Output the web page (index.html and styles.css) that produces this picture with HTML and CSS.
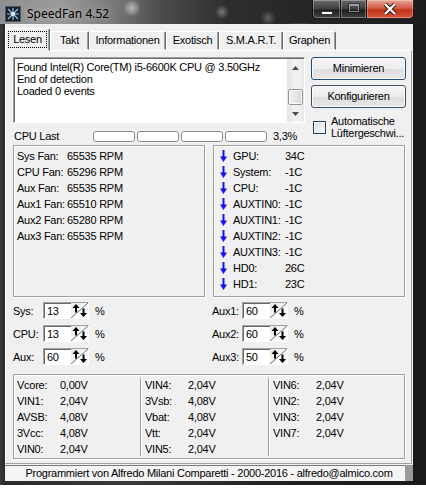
FILE: index.html
```html
<!DOCTYPE html>
<html lang="de">
<head>
  <meta charset="UTF-8">
  <title>SpeedFan 4.52</title>
  <link rel="stylesheet" href="styles.css">
</head>
<body>
<div class="window">
  <div class="titlebar">
    <svg class="app-icon" width="16" height="16" viewBox="0 0 16 16">
      <rect width="16" height="16" fill="#14202c"/>
      <rect x="0.5" y="0.5" width="15" height="15" fill="none" stroke="#4a5a6a"/>
      <g stroke="#9ec4e8" stroke-width="1.2">
        <path d="M8 8 L3 3 M8 8 L13 3 M8 8 L3 13 M8 8 L13 13 M8 8 V2 M8 8 H14 M8 8 V14 M8 8 H2"/>
      </g>
      <circle cx="8" cy="8" r="2" fill="#d8ecff"/>
    </svg>
    <span class="title">SpeedFan 4.52</span>
    <div class="caption">
      <div class="cap-btn cap-min"><span class="min-glyph"></span></div>
      <div class="cap-btn cap-max"><span class="max-glyph"></span></div>
      <div class="cap-btn cap-close">
        <svg width="14" height="12" viewBox="0 0 14 12">
          <path d="M2 1 L12 11 M12 1 L2 11" stroke="#3a1008" stroke-width="4.2"/>
          <path d="M2 1 L12 11 M12 1 L2 11" stroke="#fff" stroke-width="2.4"/>
        </svg>
      </div>
    </div>
  </div>

  <div class="client">
    <div class="tabs">
      <div class="tab tab-lesen active"><span class="focus">Lesen</span></div>
      <div class="tab tab-takt">Takt</div>
      <div class="tab tab-info">Informationen</div>
      <div class="tab tab-exo">Exotisch</div>
      <div class="tab tab-smart">S.M.A.R.T.</div>
      <div class="tab tab-graph">Graphen</div>
    </div>

    <div class="panel">
      <div class="top">
        <div class="top-left">
          <div class="log">
            <div class="log-text">
              <div>Found Intel(R) Core(TM) i5-6600K CPU @ 3.50GHz</div>
              <div>End of detection</div>
              <div>Loaded 0 events</div>
            </div>
            <div class="vscroll">
              <div class="sb-arrow">
                <svg width="7" height="4" viewBox="0 0 7 4"><path d="M3.5 0 L7 4 H0 Z" fill="#4d4d4d"/></svg>
              </div>
              <div class="sb-track"></div>
              <div class="sb-thumb"></div>
              <div class="sb-arrow">
                <svg width="7" height="4" viewBox="0 0 7 4"><path d="M0 0 H7 L3.5 4 Z" fill="#4d4d4d"/></svg>
              </div>
            </div>
          </div>
          <div class="cpu-row">
            <span class="cpu-label">CPU Last</span>
            <div class="cpu-bars"><i></i><i></i><i></i><i></i></div>
            <span class="cpu-val">3,3%</span>
          </div>
        </div>
        <div class="top-right">
          <div class="btn btn-default">Minimieren</div>
          <div class="btn">Konfigurieren</div>
          <div class="check">
            <span class="check-box"></span>
            <span class="check-label">Automatische<br>Lüftergeschwi...</span>
          </div>
        </div>
      </div>

      <div class="sensors">
        <div class="group fans">
          <div class="row"><span class="k">Sys Fan:</span><span>65535 RPM</span></div>
          <div class="row"><span class="k">CPU Fan:</span><span>65296 RPM</span></div>
          <div class="row"><span class="k">Aux Fan:</span><span>65535 RPM</span></div>
          <div class="row"><span class="k">Aux1 Fan:</span><span>65510 RPM</span></div>
          <div class="row"><span class="k">Aux2 Fan:</span><span>65280 RPM</span></div>
          <div class="row"><span class="k">Aux3 Fan:</span><span>65535 RPM</span></div>
        </div>
        <div class="group temps">
          <div class="row"><svg class="arrow" viewBox="0 0 7 12"><path d="M2.5 0h2v6.5h2.5l-3.5 5.5l-3.5-5.5h2.5z"/></svg><span class="k">GPU:</span><span>34C</span></div>
          <div class="row"><svg class="arrow" viewBox="0 0 7 12"><path d="M2.5 0h2v6.5h2.5l-3.5 5.5l-3.5-5.5h2.5z"/></svg><span class="k">System:</span><span>-1C</span></div>
          <div class="row"><svg class="arrow" viewBox="0 0 7 12"><path d="M2.5 0h2v6.5h2.5l-3.5 5.5l-3.5-5.5h2.5z"/></svg><span class="k">CPU:</span><span>-1C</span></div>
          <div class="row"><svg class="arrow" viewBox="0 0 7 12"><path d="M2.5 0h2v6.5h2.5l-3.5 5.5l-3.5-5.5h2.5z"/></svg><span class="k">AUXTIN0:</span><span>-1C</span></div>
          <div class="row"><svg class="arrow" viewBox="0 0 7 12"><path d="M2.5 0h2v6.5h2.5l-3.5 5.5l-3.5-5.5h2.5z"/></svg><span class="k">AUXTIN1:</span><span>-1C</span></div>
          <div class="row"><svg class="arrow" viewBox="0 0 7 12"><path d="M2.5 0h2v6.5h2.5l-3.5 5.5l-3.5-5.5h2.5z"/></svg><span class="k">AUXTIN2:</span><span>-1C</span></div>
          <div class="row"><svg class="arrow" viewBox="0 0 7 12"><path d="M2.5 0h2v6.5h2.5l-3.5 5.5l-3.5-5.5h2.5z"/></svg><span class="k">AUXTIN3:</span><span>-1C</span></div>
          <div class="row"><svg class="arrow" viewBox="0 0 7 12"><path d="M2.5 0h2v6.5h2.5l-3.5 5.5l-3.5-5.5h2.5z"/></svg><span class="k">HD0:</span><span>26C</span></div>
          <div class="row"><svg class="arrow" viewBox="0 0 7 12"><path d="M2.5 0h2v6.5h2.5l-3.5 5.5l-3.5-5.5h2.5z"/></svg><span class="k">HD1:</span><span>23C</span></div>
        </div>
      </div>

      <div class="speeds">
        <div class="speed-col">
          <div class="speed"><span class="k">Sys:</span><div class="spin"><span class="field">13</span><svg class="spin-btn" viewBox="0 0 17 15"><path d="M0 15 L17 0" stroke="#6a6a6a"/><path d="M5 1 L8.5 5 H6 V9.5 H4 V5 H1.5 Z M12.5 14 L9 10 H11.5 V5.5 H13.5 V10 H16 Z"/></svg></div><span class="pct">%</span></div>
          <div class="speed"><span class="k">CPU:</span><div class="spin"><span class="field">13</span><svg class="spin-btn" viewBox="0 0 17 15"><path d="M0 15 L17 0" stroke="#6a6a6a"/><path d="M5 1 L8.5 5 H6 V9.5 H4 V5 H1.5 Z M12.5 14 L9 10 H11.5 V5.5 H13.5 V10 H16 Z"/></svg></div><span class="pct">%</span></div>
          <div class="speed"><span class="k">Aux:</span><div class="spin"><span class="field">60</span><svg class="spin-btn" viewBox="0 0 17 15"><path d="M0 15 L17 0" stroke="#6a6a6a"/><path d="M5 1 L8.5 5 H6 V9.5 H4 V5 H1.5 Z M12.5 14 L9 10 H11.5 V5.5 H13.5 V10 H16 Z"/></svg></div><span class="pct">%</span></div>
        </div>
        <div class="speed-col">
          <div class="speed"><span class="k">Aux1:</span><div class="spin"><span class="field">60</span><svg class="spin-btn" viewBox="0 0 17 15"><path d="M0 15 L17 0" stroke="#6a6a6a"/><path d="M5 1 L8.5 5 H6 V9.5 H4 V5 H1.5 Z M12.5 14 L9 10 H11.5 V5.5 H13.5 V10 H16 Z"/></svg></div><span class="pct">%</span></div>
          <div class="speed"><span class="k">Aux2:</span><div class="spin"><span class="field">60</span><svg class="spin-btn" viewBox="0 0 17 15"><path d="M0 15 L17 0" stroke="#6a6a6a"/><path d="M5 1 L8.5 5 H6 V9.5 H4 V5 H1.5 Z M12.5 14 L9 10 H11.5 V5.5 H13.5 V10 H16 Z"/></svg></div><span class="pct">%</span></div>
          <div class="speed"><span class="k">Aux3:</span><div class="spin"><span class="field">50</span><svg class="spin-btn" viewBox="0 0 17 15"><path d="M0 15 L17 0" stroke="#6a6a6a"/><path d="M5 1 L8.5 5 H6 V9.5 H4 V5 H1.5 Z M12.5 14 L9 10 H11.5 V5.5 H13.5 V10 H16 Z"/></svg></div><span class="pct">%</span></div>
        </div>
      </div>

      <div class="group volts">
        <div class="vcol">
          <div class="vrow"><span class="k">Vcore:</span><span>0,00V</span></div>
          <div class="vrow"><span class="k">VIN1:</span><span>2,04V</span></div>
          <div class="vrow"><span class="k">AVSB:</span><span>4,08V</span></div>
          <div class="vrow"><span class="k">3Vcc:</span><span>4,08V</span></div>
          <div class="vrow"><span class="k">VIN0:</span><span>2,04V</span></div>
        </div>
        <div class="vcol sep">
          <div class="vrow"><span class="k">VIN4:</span><span>2,04V</span></div>
          <div class="vrow"><span class="k">3Vsb:</span><span>4,08V</span></div>
          <div class="vrow"><span class="k">Vbat:</span><span>4,08V</span></div>
          <div class="vrow"><span class="k">Vtt:</span><span>2,04V</span></div>
          <div class="vrow"><span class="k">VIN5:</span><span>2,04V</span></div>
        </div>
        <div class="vcol sep">
          <div class="vrow"><span class="k">VIN6:</span><span>2,04V</span></div>
          <div class="vrow"><span class="k">VIN2:</span><span>2,04V</span></div>
          <div class="vrow"><span class="k">VIN3:</span><span>2,04V</span></div>
          <div class="vrow"><span class="k">VIN7:</span><span>2,04V</span></div>
        </div>
      </div>
    </div>

    <div class="status">
      <div class="status-text">Programmiert von Alfredo Milani Comparetti - 2000-2016 - alfredo@almico.com</div>
      <div class="status-grip"></div>
    </div>
  </div>
</div>
</body>
</html>
```

FILE: styles.css
```css
* {
  box-sizing: border-box;
}

body {
  margin: 0;
  background: #fff;
  font-family: "Liberation Sans", Arial, sans-serif;
  font-size: 11px;
  letter-spacing: -0.25px;
  color: #000;
}

/* window frame (aero glass) */
.window {
  width: 426px;
  height: 485px;
  display: flex;
  flex-direction: column;
  background:
    linear-gradient(90deg, #3a3a3a 0, #2a2a2a 5px, #3a3a3a 30%, #1e1e1e 70%, #1a1a1a 100%);
}

.titlebar {
  height: 24px;
  display: flex;
  align-items: flex-start;
  background:
    radial-gradient(circle at 132px 8px, rgba(255,255,255,.55) 0, rgba(255,255,255,0) 9px),
    radial-gradient(circle at 222px 12px, rgba(255,255,255,.35) 0, rgba(255,255,255,0) 7px),
    radial-gradient(circle at 268px 18px, rgba(255,255,255,.25) 0, rgba(255,255,255,0) 8px),
    radial-gradient(ellipse at 300px 24px, rgba(255,255,255,.2) 0, rgba(255,255,255,0) 14px),
    linear-gradient(90deg, #8f8f8f 0, #9a9a9a 60px, #7c7c7c 110px, #4c4c4c 160px, #2e2e2e 230px, #242424 320px, #1c1c1c 426px);
}

.app-icon {
  margin: 6px 0 0 5px;
  width: 16px;
  height: 16px;
  flex: none;
}

.title {
  margin: 5px 0 0 6px;
  font-family: "Noto Sans", "Open Sans", sans-serif;
  font-size: 12px;
  letter-spacing: 0;
  color: #000;
  text-shadow: 0 0 6px rgba(255,255,255,.6);
}

.caption {
  margin-left: auto;
  margin-right: 12px;
  display: flex;
  height: 19px;
}

.cap-btn {
  height: 19px;
  border: 1px solid rgba(0,0,0,.75);
  border-top: none;
  box-shadow: inset 0 0 0 1px rgba(255,255,255,.3);
  background: linear-gradient(rgba(255,255,255,.32), rgba(255,255,255,.12) 50%, rgba(0,0,0,.15) 55%, rgba(255,255,255,.15));
  display: flex;
  align-items: center;
  justify-content: center;
}

.cap-min {
  width: 29px;
  border-radius: 0 0 0 5px;
}

.cap-max {
  width: 26px;
  border-left: none;
}

.cap-close {
  width: 47px;
  border-left: none;
  border-radius: 0 0 5px 0;
  background: linear-gradient(#e8a596, #d25c44 45%, #c0331a 55%, #d6563c);
}

.min-glyph {
  width: 12px;
  height: 4px;
  margin-top: 7px;
  background: #fff;
  border: 1px solid #333;
}

.max-glyph {
  width: 10px;
  height: 8px;
  border: 1px solid rgba(255,255,255,.45);
  border-top-width: 2px;
  outline: 1px solid rgba(0,0,0,.35);
  margin-top: -2px;
}

/* client area */
.client {
  margin-left: 5px;
  width: 408px;
  height: 457px;
  background: #f0f0f0;
  display: flex;
  flex-direction: column;
}

.tabs {
  height: 26px;
  display: flex;
  align-items: flex-start;
  position: relative;
  z-index: 1;
}

.tab {
  margin-top: 7px;
  height: 19px;
  line-height: 17px;
  text-align: center;
  white-space: nowrap;
  border: 1px solid;
  border-color: #fff #696969 transparent #fff;
  border-radius: 2px 2px 0 0;
  box-shadow: inset -1px 0 #a0a0a0;
  background: #f0f0f0;
}

.tab.active {
  margin-top: 4px;
  height: 23px;
  padding-top: 2px;
}

.focus {
  display: inline-block;
  padding: 0 4px;
  line-height: 15px;
  border: 1px dotted #000;
}

.tab-lesen { width: 45px; }
.tab-takt { width: 39px; }
.tab-info { width: 77px; }
.tab-exo { width: 53px; }
.tab-smart { width: 64px; }
.tab-graph { width: 53px; }

.panel {
  height: 414px;
  width: 407px;
  border: 1px solid;
  border-color: #fff #a0a0a0 #a0a0a0 #fff;
  padding: 6px 0 0 7px;
}

.top {
  display: flex;
  gap: 6px;
}

.top-left {
  width: 292px;
}

.log {
  height: 66px;
  display: flex;
  border: 1px solid;
  border-color: #a0a0a0 #fff #fff #a0a0a0;
  box-shadow: inset 1px 1px #696969;
  background: #fff;
  padding: 1px 0 0 1px;
}

.log-text {
  flex: 1;
  padding: 2px 0 0 2px;
  line-height: 12px;
  white-space: nowrap;
  overflow: hidden;
}

.vscroll {
  width: 17px;
  display: flex;
  flex-direction: column;
  background: linear-gradient(90deg, #e3e3e3, #f1f1f1 40%, #f1f1f1 70%, #e8e8e8);
}

.sb-arrow {
  height: 17px;
  display: flex;
  align-items: center;
  justify-content: center;
}

.sb-track {
  flex: 1;
}

.sb-thumb {
  height: 16px;
  margin: 0 1px;
  border: 1px solid #979797;
  border-radius: 2px;
  background: linear-gradient(90deg, #f3f3f3, #e6e6e6 50%, #d6d6d6);
  box-shadow: inset 0 0 0 1px #fafafa;
}

.cpu-row {
  margin-top: 6px;
  height: 14px;
  display: flex;
  align-items: center;
}

.cpu-label {
  width: 80px;
  padding-left: 1px;
}

.cpu-bars {
  display: flex;
  gap: 2px;
}

.cpu-bars i {
  width: 42px;
  height: 11px;
  border: 1px solid #8c8c8c;
  border-radius: 3px;
  background: #fff;
}

.cpu-val {
  margin-left: 6px;
}

.top-right {
  width: 95px;
  display: flex;
  flex-direction: column;
}

.btn {
  height: 23px;
  line-height: 21px;
  text-align: center;
  border: 1px solid #3c4f68;
  border-radius: 3px;
  background: linear-gradient(#f6f6f6, #ececec 50%, #dfdfdf 52%, #e6e6e6);
  box-shadow: inset 0 0 0 1px #fcfcfc;
}

.btn + .btn {
  margin-top: 5px;
}

.btn-default {
  border-color: #1d4a78;
}

.check {
  margin-top: 7px;
  display: flex;
  align-items: center;
}

.check-box {
  width: 13px;
  height: 13px;
  margin: 0 5px 0 2px;
  border: 1px solid #1f4266;
  background: linear-gradient(135deg, #dcdcdc, #fbfbfb);
  box-shadow: inset 0 0 0 1px #f4f4f4;
  flex: none;
}

.check-label {
  line-height: 12px;
  white-space: nowrap;
}

/* sensor groups */
.group {
  border: 1px solid #a0a0a0;
  box-shadow: inset 1px 1px #fff, 1px 1px #fff;
}

.sensors {
  margin-top: 2px;
  display: flex;
  gap: 8px;
}

.fans,
.temps {
  width: 192px;
  height: 152px;
  padding-top: 2px;
}

.fans {
  padding-left: 3px;
}

.temps {
  padding-left: 6px;
}

.row {
  height: 16px;
  line-height: 16px;
  display: flex;
  align-items: center;
  white-space: nowrap;
}

.row .k {
  flex: none;
}

.fans .k {
  min-width: 50px;
}

.temps .k {
  min-width: 52px;
}

.arrow {
  width: 7px;
  height: 12px;
  margin-right: 6px;
  fill: #1212f5;
  flex: none;
}

/* fan speed inputs */
.speeds {
  margin-top: 5px;
  display: flex;
}

.speed-col {
  width: 200px;
  display: flex;
  flex-direction: column;
  gap: 6px;
}

.speed {
  height: 17px;
  display: flex;
  align-items: center;
}

.speed .k {
  width: 30px;
}

.spin {
  width: 46px;
  height: 17px;
  display: flex;
  border: 1px solid;
  border-color: #a0a0a0 #fff #fff #a0a0a0;
  box-shadow: inset 1px 1px #696969;
  background: #fff;
}

.field {
  flex: 1;
  padding: 1px 0 0 3px;
  line-height: 14px;
}

.spin-btn {
  width: 17px;
  height: 15px;
  background: linear-gradient(135deg, #e6e6e6, #f6f6f6 50%, #ffffff 51%, #f4f4f4);
  fill: #000;
}

.pct {
  margin-left: 6px;
}

/* voltages */
.volts {
  margin-top: 9px;
  width: 392px;
  height: 85px;
  display: flex;
  padding: 3px 0 2px 0;
}

.vcol {
  width: 126px;
  padding-left: 3px;
}

.vcol.sep {
  width: 128px;
  border-left: 1px solid #a0a0a0;
  box-shadow: inset 1px 0 #fff;
  padding-left: 4px;
}

.vcol.sep:last-child {
  flex: 1;
}

.vrow {
  height: 16px;
  line-height: 15px;
  display: flex;
}

.vrow .k {
  width: 43px;
}

/* status bar */
.status {
  margin-top: 1px;
  height: 16px;
  display: flex;
}

.status-text {
  width: 400px;
  border-top: 1px solid #7a7a7a;
  background: #f4f4f4;
  text-align: center;
  padding-left: 8px;
  line-height: 14px;
  white-space: nowrap;
}

.status-grip {
  flex: 1;
  background: #9a9a9a;
}
```
